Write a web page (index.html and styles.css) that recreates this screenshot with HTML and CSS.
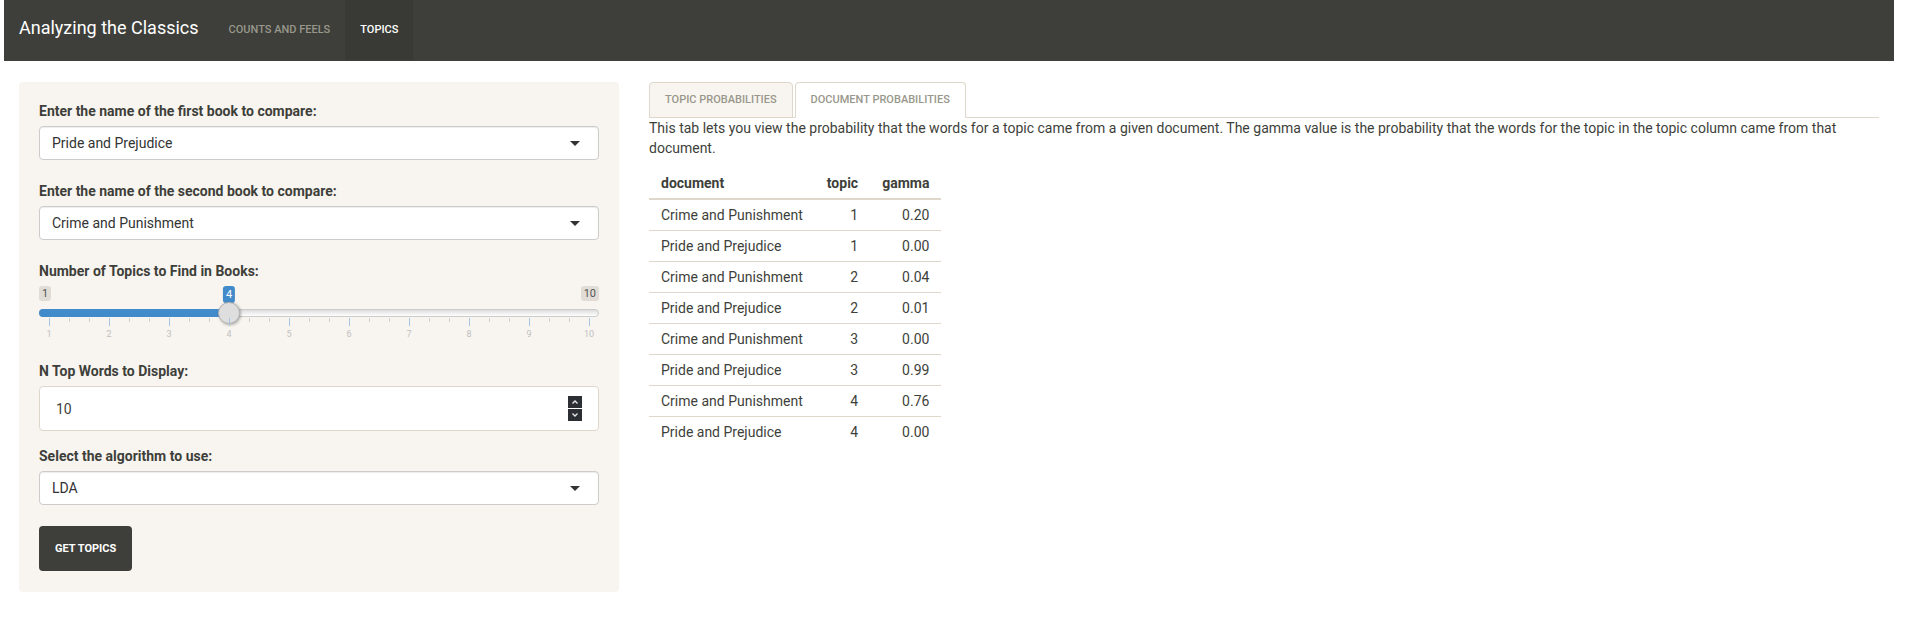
FILE: index.html
```html
<!DOCTYPE html>
<html>
<head>
<meta charset="utf-8">
<title>Analyzing the Classics</title>
<link rel="stylesheet" href="styles.css">
</head>
<body>
<div class="page">
  <nav class="navbar">
    <div class="brand">Analyzing the Classics</div>
    <ul class="nav">
      <li><a>Counts and Feels</a></li>
      <li class="active"><a>Topics</a></li>
    </ul>
  </nav>
  <div class="row">
    <div class="col side">
      <form class="well">
        <div class="group select-group">
          <label>Enter the name of the first book to compare:</label>
          <div class="select"><span>Pride and Prejudice</span><span class="caret"></span></div>
        </div>
        <div class="group select-group">
          <label>Enter the name of the second book to compare:</label>
          <div class="select"><span>Crime and Punishment</span><span class="caret"></span></div>
        </div>
        <div class="group">
          <label>Number of Topics to Find in Books:</label>
          <div class="irs">
            <span class="irs-min">1</span>
            <span class="irs-max">10</span>
            <div class="irs-line"></div>
            <div class="irs-bar" style="width: 190px"></div>
            <span class="irs-from" style="left: 190px">4</span>
            <div class="irs-handle" style="left: 179px"></div>
            <div class="irs-grid">
              <span class="tick major" style="left: 10px"></span><span class="tick" style="left: 30px"></span><span class="tick" style="left: 50px"></span>
              <span class="tick major" style="left: 70px"></span><span class="tick" style="left: 90px"></span><span class="tick" style="left: 110px"></span>
              <span class="tick major" style="left: 130px"></span><span class="tick" style="left: 150px"></span><span class="tick" style="left: 170px"></span>
              <span class="tick major" style="left: 190px"></span><span class="tick" style="left: 210px"></span><span class="tick" style="left: 230px"></span>
              <span class="tick major" style="left: 250px"></span><span class="tick" style="left: 270px"></span><span class="tick" style="left: 290px"></span>
              <span class="tick major" style="left: 310px"></span><span class="tick" style="left: 330px"></span><span class="tick" style="left: 350px"></span>
              <span class="tick major" style="left: 370px"></span><span class="tick" style="left: 390px"></span><span class="tick" style="left: 410px"></span>
              <span class="tick major" style="left: 430px"></span><span class="tick" style="left: 450px"></span><span class="tick" style="left: 470px"></span>
              <span class="tick major" style="left: 490px"></span><span class="tick" style="left: 510px"></span><span class="tick" style="left: 530px"></span>
              <span class="tick major" style="left: 550px"></span>
              <span class="grid-text" style="left: 10px">1</span>
              <span class="grid-text" style="left: 70px">2</span>
              <span class="grid-text" style="left: 130px">3</span>
              <span class="grid-text" style="left: 190px">4</span>
              <span class="grid-text" style="left: 250px">5</span>
              <span class="grid-text" style="left: 310px">6</span>
              <span class="grid-text" style="left: 370px">7</span>
              <span class="grid-text" style="left: 430px">8</span>
              <span class="grid-text" style="left: 490px">9</span>
              <span class="grid-text" style="left: 550px">10</span>
            </div>
          </div>
        </div>
        <div class="group">
          <label>N Top Words to Display:</label>
          <div class="numeric">
            <span>10</span>
            <span class="spinner">
              <span class="spin"><svg width="8" height="6" viewBox="0 0 8 6"><path d="M1.5 4.5 L4 2 L6.5 4.5" fill="none" stroke="#e8e8e8" stroke-width="1.3"/></svg></span>
              <span class="spin"><svg width="8" height="6" viewBox="0 0 8 6"><path d="M1.5 1.5 L4 4 L6.5 1.5" fill="none" stroke="#e8e8e8" stroke-width="1.3"/></svg></span>
            </span>
          </div>
        </div>
        <div class="group select-group">
          <label>Select the algorithm to use:</label>
          <div class="select"><span>LDA</span><span class="caret"></span></div>
        </div>
        <div class="btn">Get Topics</div>
      </form>
    </div>
    <div class="col main">
      <ul class="tabs">
        <li><a>Topic Probabilities</a></li>
        <li class="active"><a>Document Probabilities</a></li>
      </ul>
      <p class="desc">This tab lets you view the probability that the words for a topic came from a given document. The gamma value is the probability that the words for the topic in the topic column came from that document.</p>
      <table class="table">
        <thead>
          <tr><th class="left">document</th><th>topic</th><th>gamma</th></tr>
        </thead>
        <tbody>
          <tr><td class="left">Crime and Punishment</td><td>1</td><td>0.20</td></tr>
          <tr><td class="left">Pride and Prejudice</td><td>1</td><td>0.00</td></tr>
          <tr><td class="left">Crime and Punishment</td><td>2</td><td>0.04</td></tr>
          <tr><td class="left">Pride and Prejudice</td><td>2</td><td>0.01</td></tr>
          <tr><td class="left">Crime and Punishment</td><td>3</td><td>0.00</td></tr>
          <tr><td class="left">Pride and Prejudice</td><td>3</td><td>0.99</td></tr>
          <tr><td class="left">Crime and Punishment</td><td>4</td><td>0.76</td></tr>
          <tr><td class="left">Pride and Prejudice</td><td>4</td><td>0.00</td></tr>
        </tbody>
      </table>
    </div>
  </div>
</div>
</body>
</html>
```
FILE: styles.css
```css
* { box-sizing: border-box; }
body {
  margin: 0;
  font-family: Roboto, "Helvetica Neue", Arial, sans-serif;
  font-size: 14px;
  line-height: 20px;
  color: #3e3f3a;
  background: #fff;
}
.page { margin-left: 4px; width: 1890px; }

.navbar {
  display: flex;
  height: 61px;
  background: #3e3f3a;
  border-bottom: 1px solid #3e3f3a;
  margin-bottom: 21px;
}
.brand {
  padding: 0 15px;
  line-height: 56px;
  font-size: 18px;
  color: #fff;
}
.nav { list-style: none; margin: 0; padding: 0; display: flex; }
.nav a {
  display: block;
  padding: 0 15px;
  line-height: 60px;
  height: 60px;
  font-size: 11px;
  font-weight: 500;
  text-transform: uppercase;
  color: #98978b;
}
.nav .active a { background: #393a35; color: #fff; }

.row { display: grid; grid-template-columns: 630px 1260px; }
.col { padding: 0 15px; }

.well {
  display: block;
  margin: 0;
  background: #f8f5f0;
  border-radius: 4px;
  padding: 19px 20px 21px;
}
label { display: block; font-weight: 700; margin-bottom: 5px; }
.group { margin-bottom: 15px; }
.select-group { margin-bottom: 21px; }
.select {
  height: 34px;
  border: 1px solid #cccccc;
  border-radius: 4px;
  background: #fff;
  padding: 0 12px;
  display: flex;
  align-items: center;
  justify-content: space-between;
  box-shadow: inset 0 1px 1px rgba(0,0,0,0.075);
  color: #333;
}
.caret {
  width: 0; height: 0;
  border-left: 5px solid transparent;
  border-right: 5px solid transparent;
  border-top: 5px solid #333;
  margin-right: 6px;
}

.irs { position: relative; height: 60px; }
.irs-min, .irs-max, .irs-from {
  position: absolute;
  top: 0;
  font-size: 11px;
  line-height: 15px;
  padding: 0 3px;
  border-radius: 3px;
}
.irs-min, .irs-max { background: #e1ddd6; color: #555; }
.irs-min { left: 0; }
.irs-max { right: 0; }
.irs-from {
  background: #428bca;
  color: #fff;
  height: 17px;
  line-height: 17px;
  transform: translateX(-50%);
}
.irs-line {
  position: absolute;
  left: 0; right: 0; top: 23px;
  height: 8px;
  border: 1px solid #cccccc;
  border-radius: 8px;
  background: linear-gradient(#dddddd, #ffffff);
}
.irs-bar {
  position: absolute;
  left: 0; top: 23px;
  height: 8px;
  border-radius: 8px 0 0 8px;
  background: #428bca;
}
.irs-handle {
  position: absolute;
  top: 16px;
  width: 22px; height: 22px;
  border-radius: 50%;
  background: #dedede;
  border: 1px solid #b3b3b3;
  box-shadow: 1px 1px 3px rgba(0,0,0,0.3);
}
.irs-grid { position: absolute; left: 0; right: 0; top: 32px; height: 28px; }
.tick {
  position: absolute;
  top: 0;
  width: 1px;
  height: 4px;
  background: #cfcfcf;
}
.tick.major { height: 8px; background: #a9c4e2; }
.grid-text {
  position: absolute;
  top: 10px;
  font-size: 9px;
  line-height: 12px;
  color: #c0c0c0;
  transform: translateX(-50%);
}

.numeric {
  height: 45px;
  border: 1px solid #dfd7ca;
  border-radius: 4px;
  background: #fff;
  padding: 0 16px 0 16px;
  display: flex;
  align-items: center;
  justify-content: space-between;
}
.spinner { display: flex; flex-direction: column; gap: 1px; }
.spin {
  width: 14px; height: 12px;
  background: #2b2e33;
  display: flex; align-items: center; justify-content: center;
}
.spin svg { display: block; }

.btn {
  display: inline-block;
  background: #3e3f3a;
  color: #fff;
  border-radius: 4px;
  height: 45px;
  line-height: 45px;
  padding: 0 16px;
  font-size: 11px;
  font-weight: 700;
  text-transform: uppercase;
}

.tabs {
  list-style: none;
  margin: 0; padding: 0;
  display: flex;
  border-bottom: 1px solid #dfd7ca;
}
.tabs li { margin-bottom: -1px; margin-right: 2px; }
.tabs a {
  display: block;
  padding: 0 15px;
  line-height: 34px;
  border: 1px solid #dfd7ca;
  border-radius: 4px 4px 0 0;
  background: #f8f5f0;
  font-size: 11px;
  font-weight: 500;
  text-transform: uppercase;
  color: #98978b;
}
.tabs .active a { background: #fff; border-bottom-color: #fff; }

.desc { margin: 0 0 10px; }

.table { border-collapse: collapse; }
.table th, .table td { padding: 5px 12px; text-align: right; }
.table th { font-weight: 700; border-bottom: 2px solid #dfd7ca; }
.table td { border-top: 1px solid #dfd7ca; }
.table .left { text-align: left; }
```
